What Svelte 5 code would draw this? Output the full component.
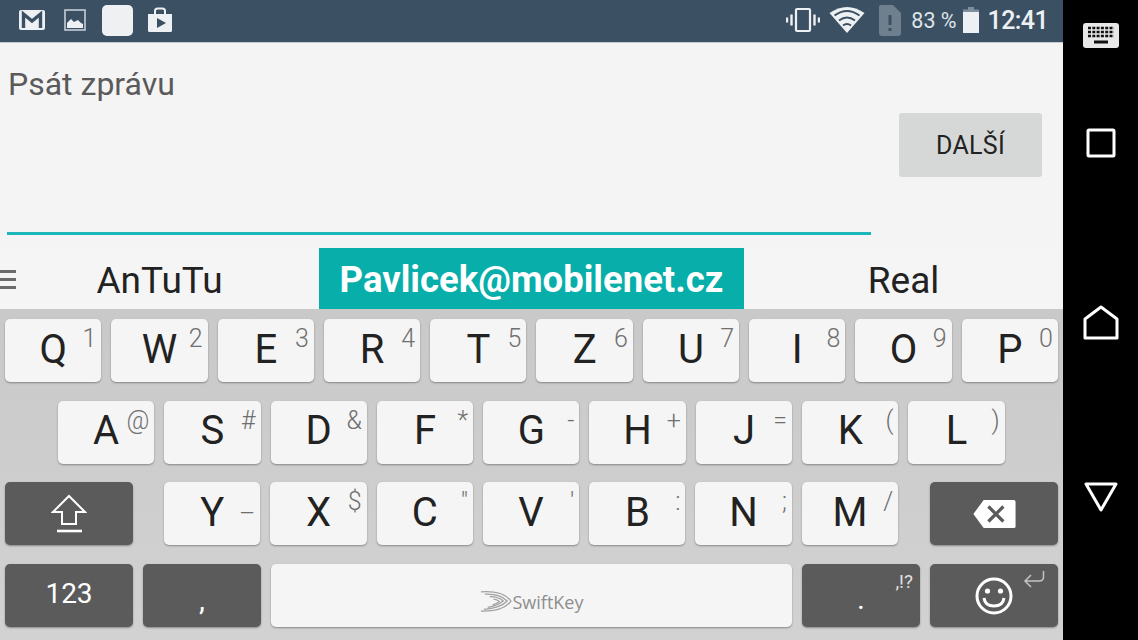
<script lang="ts">
  const row1 = [['Q', '1'], ['W', '2'], ['E', '3'], ['R', '4'], ['T', '5'], ['Z', '6'], ['U', '7'], ['I', '8'], ['O', '9'], ['P', '0']];
  const row2 = [['A', '@'], ['S', '#'], ['D', '&'], ['F', '*'], ['G', '-'], ['H', '+'], ['J', '='], ['K', '('], ['L', ')']];
  const row3 = [['Y', '–'], ['X', '$'], ['C', '"'], ['V', "'"], ['B', ':'], ['N', ';'], ['M', '/']];
</script>

{#snippet key(k: string[])}
  <div class="key">
    <span class="letter">{k[0]}</span>
    <span class="hint" class:low={k[1] === '–'}>{k[1]}</span>
  </div>
{/snippet}

<div class="phone">
  <div class="screen">
    <header class="status">
      <div class="notif">
        <svg width="26" height="20" viewBox="0 0 26 20">
          <rect x="0" y="0" width="26" height="20" rx="2" fill="#eef1f3" />
          <path d="M4.500 18V4L13 11L21.500 4V18" fill="none" stroke="#3c5064" stroke-width="3.400" />
        </svg>
        <svg class="pic" width="22" height="22" viewBox="0 0 22 22">
          <rect x="1" y="1" width="20" height="20" fill="none" stroke="#c6ced5" stroke-width="1.600" />
          <path d="M3 19V14L7 10L10 13L14 11L17 14L19 15V19Z" fill="#eef1f3" />
        </svg>
        <div class="blank"></div>
        <svg class="bag" width="26" height="26" viewBox="0 0 26 26">
          <path d="M1 7H25V23.500Q25 25 23.500 25H2.500Q1 25 1 23.500Z" fill="#eef1f3" />
          <path d="M8 7V4Q8 1.500 10.500 1.500H15.500Q18 1.500 18 4V7" fill="none" stroke="#eef1f3" stroke-width="2" />
          <path d="M10 11L19 16L10 21Z" fill="#3c5064" />
        </svg>
      </div>
      <div class="sys">
        <svg class="vib" width="34" height="26" viewBox="0 0 34 26">
          <rect x="10" y="2" width="14" height="22" rx="1" fill="none" stroke="#eef1f3" stroke-width="2.200" />
          <path d="M5.500 7.500V18.500M1 10.500V15.500M28.500 7.500V18.500M33 10.500V15.500" stroke="#eef1f3" stroke-width="2.400" fill="none" />
        </svg>
        <svg class="wifi" width="36" height="28" viewBox="0 0 36 28">
          <path d="M18 27L0.500 7Q18 -5 35.500 7Z" fill="#eef1f3" />
          <path d="M5.500 9.500Q18 0.500 30.500 9.500M10 14.500Q18 8.500 26 14.500M14 19.500Q18 16.500 22 19.500" fill="none" stroke="#3c5064" stroke-width="2" />
        </svg>
        <svg class="sim" width="22" height="31" viewBox="0 0 22 31">
          <path d="M2 0H14L22 8V28Q22 31 19 31H3Q0 31 0 28V2Q0 0 2 0Z" fill="#6e7f8e" />
          <path d="M9.500 10H12.500V20H9.500ZM9.500 23H12.500V26H9.500Z" fill="#3c5064" />
        </svg>
        <span class="pct">83 %</span>
        <svg class="batt" width="16" height="26" viewBox="0 0 16 26">
          <path d="M5 0H11V2.500H16V5H0V2.500H5Z" fill="#7f8e9c" />
          <rect x="0" y="5" width="16" height="21" fill="#eef1f3" />
        </svg>
        <span class="time">12:41</span>
      </div>
    </header>

    <section class="compose">
      <div class="field">
        <span class="placeholder">Psát zprávu</span>
      </div>
      <button class="next">DALŠÍ</button>
    </section>

    <section class="suggest">
      <div class="menu"><i></i><i></i><i></i></div>
      <div class="word left">AnTuTu</div>
      <div class="word picked">Pavlicek@mobilenet.cz</div>
      <div class="word right">Real</div>
    </section>

    <section class="keyboard">
      <div class="row">
        {#each row1 as k}{@render key(k)}{/each}
      </div>
      <div class="row second">
        {#each row2 as k}{@render key(k)}{/each}
      </div>
      <div class="row third">
        <div class="key dark wide">
          <svg width="36" height="40" viewBox="0 0 36 40">
            <path d="M18 2L34 18H25V30H11V18H2Z" fill="none" stroke="#fff" stroke-width="2" stroke-linejoin="miter" />
            <path d="M6 37H31" stroke="#fff" stroke-width="2.600" />
          </svg>
        </div>
        <div class="letters">
          {#each row3 as k}{@render key(k)}{/each}
        </div>
        <div class="key dark wide">
          <svg width="44" height="30" viewBox="0 0 46 32">
            <path d="M12 1H44Q46 1 46 3V29Q46 31 44 31H12L1 16Z" fill="#fff" />
            <path d="M17 8L33 24M33 8L17 24" stroke="#5b5b5b" stroke-width="3.400" />
          </svg>
        </div>
      </div>
      <div class="row">
        <div class="key dark wide"><span class="num">123</span></div>
        <div class="key dark comma"><span class="mark">,</span></div>
        <div class="key space">
          <div class="brand">
            <svg width="32" height="23" viewBox="0 0 33 23">
              <path d="M1 1.500Q24 0 32 11Q24 22 1 21.500" fill="none" stroke="#a0a0a0" stroke-width="1.300" />
              <path d="M5 4Q21 3.500 28 11Q21 18.500 4 19.500" fill="none" stroke="#a0a0a0" stroke-width="1.300" />
              <path d="M10 6.500Q19 6.500 24 11Q18 16 8 17.500" fill="none" stroke="#a0a0a0" stroke-width="1.300" />
              <path d="M14 9Q18 9.500 20 11.500Q17 14 13 15" fill="none" stroke="#a0a0a0" stroke-width="1.300" />
            </svg>
            <span>SwiftKey</span>
          </div>
        </div>
        <div class="key dark comma">
          <span class="mark dot">.</span>
          <span class="punct">,!?</span>
        </div>
        <div class="key dark wide">
          <svg width="38" height="40" viewBox="0 0 38 40">
            <circle cx="19" cy="20" r="17" fill="none" stroke="#fff" stroke-width="3" />
            <circle cx="12.500" cy="15" r="2.600" fill="#fff" />
            <circle cx="25.500" cy="15" r="2.600" fill="#fff" />
            <path d="M9 22Q10 30 19 30Q28 30 29 22" fill="none" stroke="#fff" stroke-width="3" />
          </svg>
          <svg class="enter" width="22" height="18" viewBox="0 0 22 18">
            <path d="M20.500 0V6Q20.500 10 16 10H2M8 4L2 10L8 16" fill="none" stroke="#c4c4c4" stroke-width="1.500" />
          </svg>
        </div>
      </div>
    </section>
  </div>

  <nav class="navbar">
    <svg width="36" height="26" viewBox="0 0 36 26">
      <rect width="36" height="25" rx="3" fill="#e8e8e8" />
      <path d="M5 5H31M5 9H31M5 13H31" stroke="#111" stroke-width="2.600" stroke-dasharray="3 1.300" />
      <path d="M11 19H25" stroke="#111" stroke-width="3" />
    </svg>
    <svg width="30" height="30" viewBox="0 0 30 30">
      <rect x="2" y="2" width="26" height="26" rx="1" fill="none" stroke="#fff" stroke-width="3" />
    </svg>
    <svg width="36" height="36" viewBox="0 0 36 36">
      <path d="M2 33V14L18 2L34 14V33Z" fill="none" stroke="#fff" stroke-width="3" stroke-linejoin="round" />
    </svg>
    <svg width="34" height="31" viewBox="0 0 34 31">
      <path d="M2 2H32L17 28Z" fill="none" stroke="#fff" stroke-width="3" stroke-linejoin="round" />
    </svg>
  </nav>
</div>

<style>
  :global(body) {
    margin: 0;
    background: #000;
  }

  .phone {
    display: flex;
    width: 1138px;
    height: 640px;
    overflow: hidden;
    font-family: Roboto, "Liberation Sans", sans-serif;
  }

  .screen {
    display: flex;
    flex-direction: column;
    width: 1063px;
  }

  .status {
    display: flex;
    flex: none;
    justify-content: space-between;
    align-items: center;
    box-sizing: border-box;
    height: 43px;
    padding: 0 15px 2px 19px;
    background: #3c5064;
    border-bottom: 1px solid #c5ccd2;
    color: #eef1f3;
  }

  .notif {
    display: flex;
    align-items: center;
  }

  .pic {
    margin-left: 19px;
  }

  .blank {
    width: 31px;
    height: 31px;
    margin-left: 16px;
    background: #eef0f2;
    border-radius: 5px;
  }

  .bag {
    margin-left: 14px;
  }

  .sys {
    display: flex;
    align-items: center;
  }

  .wifi {
    margin-left: 9px;
  }

  .sim {
    margin-left: 14px;
  }

  .pct {
    margin-left: 10px;
    font-size: 21.500px;
    color: #dfe4e8;
  }

  .batt {
    margin-left: 6px;
  }

  .time {
    margin-left: 9px;
    font-size: 25px;
    font-weight: 500;
    letter-spacing: -0.6px;
  }

  .compose {
    position: relative;
    flex: none;
    height: 205px;
    background: #f4f4f4;
  }

  .field {
    box-sizing: border-box;
    width: 864px;
    height: 192px;
    margin-left: 7px;
    padding: 22px 0 0 1px;
    border-bottom: 3px solid #1cb5b9;
  }

  .placeholder {
    font-size: 32px;
    line-height: 38px;
    color: #5a5a5a;
  }

  .next {
    position: absolute;
    top: 70px;
    right: 21px;
    width: 143px;
    height: 64px;
    padding: 0;
    border: 0;
    border-radius: 3px;
    background: #d6d8d8;
    color: #222;
    font: 400 25px Roboto, "Liberation Sans", sans-serif;
    letter-spacing: 0.3px;
  }

  .suggest {
    display: flex;
    flex: none;
    position: relative;
    align-items: center;
    height: 61px;
    background: #f5f5f5;
  }

  .menu {
    display: flex;
    flex-direction: column;
    gap: 5px;
    position: absolute;
    left: 0;
    top: 22px;
    width: 16px;
  }

  .menu i {
    height: 3px;
    background: #6c6c6c;
  }

  .word {
    display: flex;
    justify-content: center;
    align-items: center;
    box-sizing: border-box;
    height: 100%;
    padding-top: 3px;
    font-size: 37px;
    color: #222;
  }

  .left {
    width: 319px;
  }

  .picked {
    width: 425px;
    padding-top: 1px;
    background: #08aeaa;
    color: #fff;
    font-size: 36.500px;
    font-weight: 700;
  }

  .right {
    width: 319px;
  }

  .keyboard {
    display: flex;
    flex: 1;
    flex-direction: column;
    gap: 18.700px;
    padding: 10px 5px 0;
    background: linear-gradient(#c9c9c9, #d2d2d2);
  }

  .row {
    display: flex;
    gap: 10px;
    height: 63px;
  }

  .second {
    padding-left: 53px;
  }

  .third {
    gap: 0;
  }

  .letters {
    display: flex;
    gap: 10px;
    margin: 0 32px 0 31px;
  }

  .key {
    display: flex;
    position: relative;
    flex: none;
    justify-content: center;
    align-items: center;
    box-sizing: border-box;
    width: 96.300px;
    height: 63px;
    background: #f5f5f5;
    border-radius: 5px;
    box-shadow: 0 1px 2px rgba(0, 0, 0, 0.35);
  }

  .letter {
    font-size: 40px;
    line-height: 1;
    color: #222;
    transform: translateY(-1px);
  }

  .hint {
    position: absolute;
    top: 6px;
    right: 5px;
    font-size: 25px;
    line-height: 27px;
    font-weight: 300;
    color: #6f6f6f;
  }

  .hint.low {
    top: 18px;
  }

  .dark {
    background: #5b5b5b;
    color: #fff;
  }

  .wide {
    width: 128px;
  }

  .comma {
    width: 118px;
  }

  .num {
    font-size: 28px;
    transform: translateY(-2px);
  }

  .mark {
    font-size: 30px;
    line-height: 1;
    transform: translateY(4px);
  }

  .dot {
    transform: translateY(3px);
  }

  .punct {
    position: absolute;
    top: 6px;
    right: 7px;
    font-size: 19px;
    color: #e0e0e0;
  }

  .space {
    width: 521px;
  }

  .brand {
    display: flex;
    align-items: center;
    gap: 1px;
    transform: translateY(6px);
    color: #8e8e8e;
    font-family: "Open Sans", Roboto, sans-serif;
    font-size: 18px;
  }

  .enter {
    position: absolute;
    top: 7px;
    right: 13px;
  }

  .navbar {
    display: flex;
    flex: 1;
    flex-direction: column;
    align-items: center;
    padding-top: 23px;
    background: #000;
  }

  .navbar svg:nth-child(2) {
    margin-top: 79px;
  }

  .navbar svg:nth-child(3) {
    margin-top: 147px;
  }

  .navbar svg:nth-child(4) {
    margin-top: 141px;
  }
</style>
